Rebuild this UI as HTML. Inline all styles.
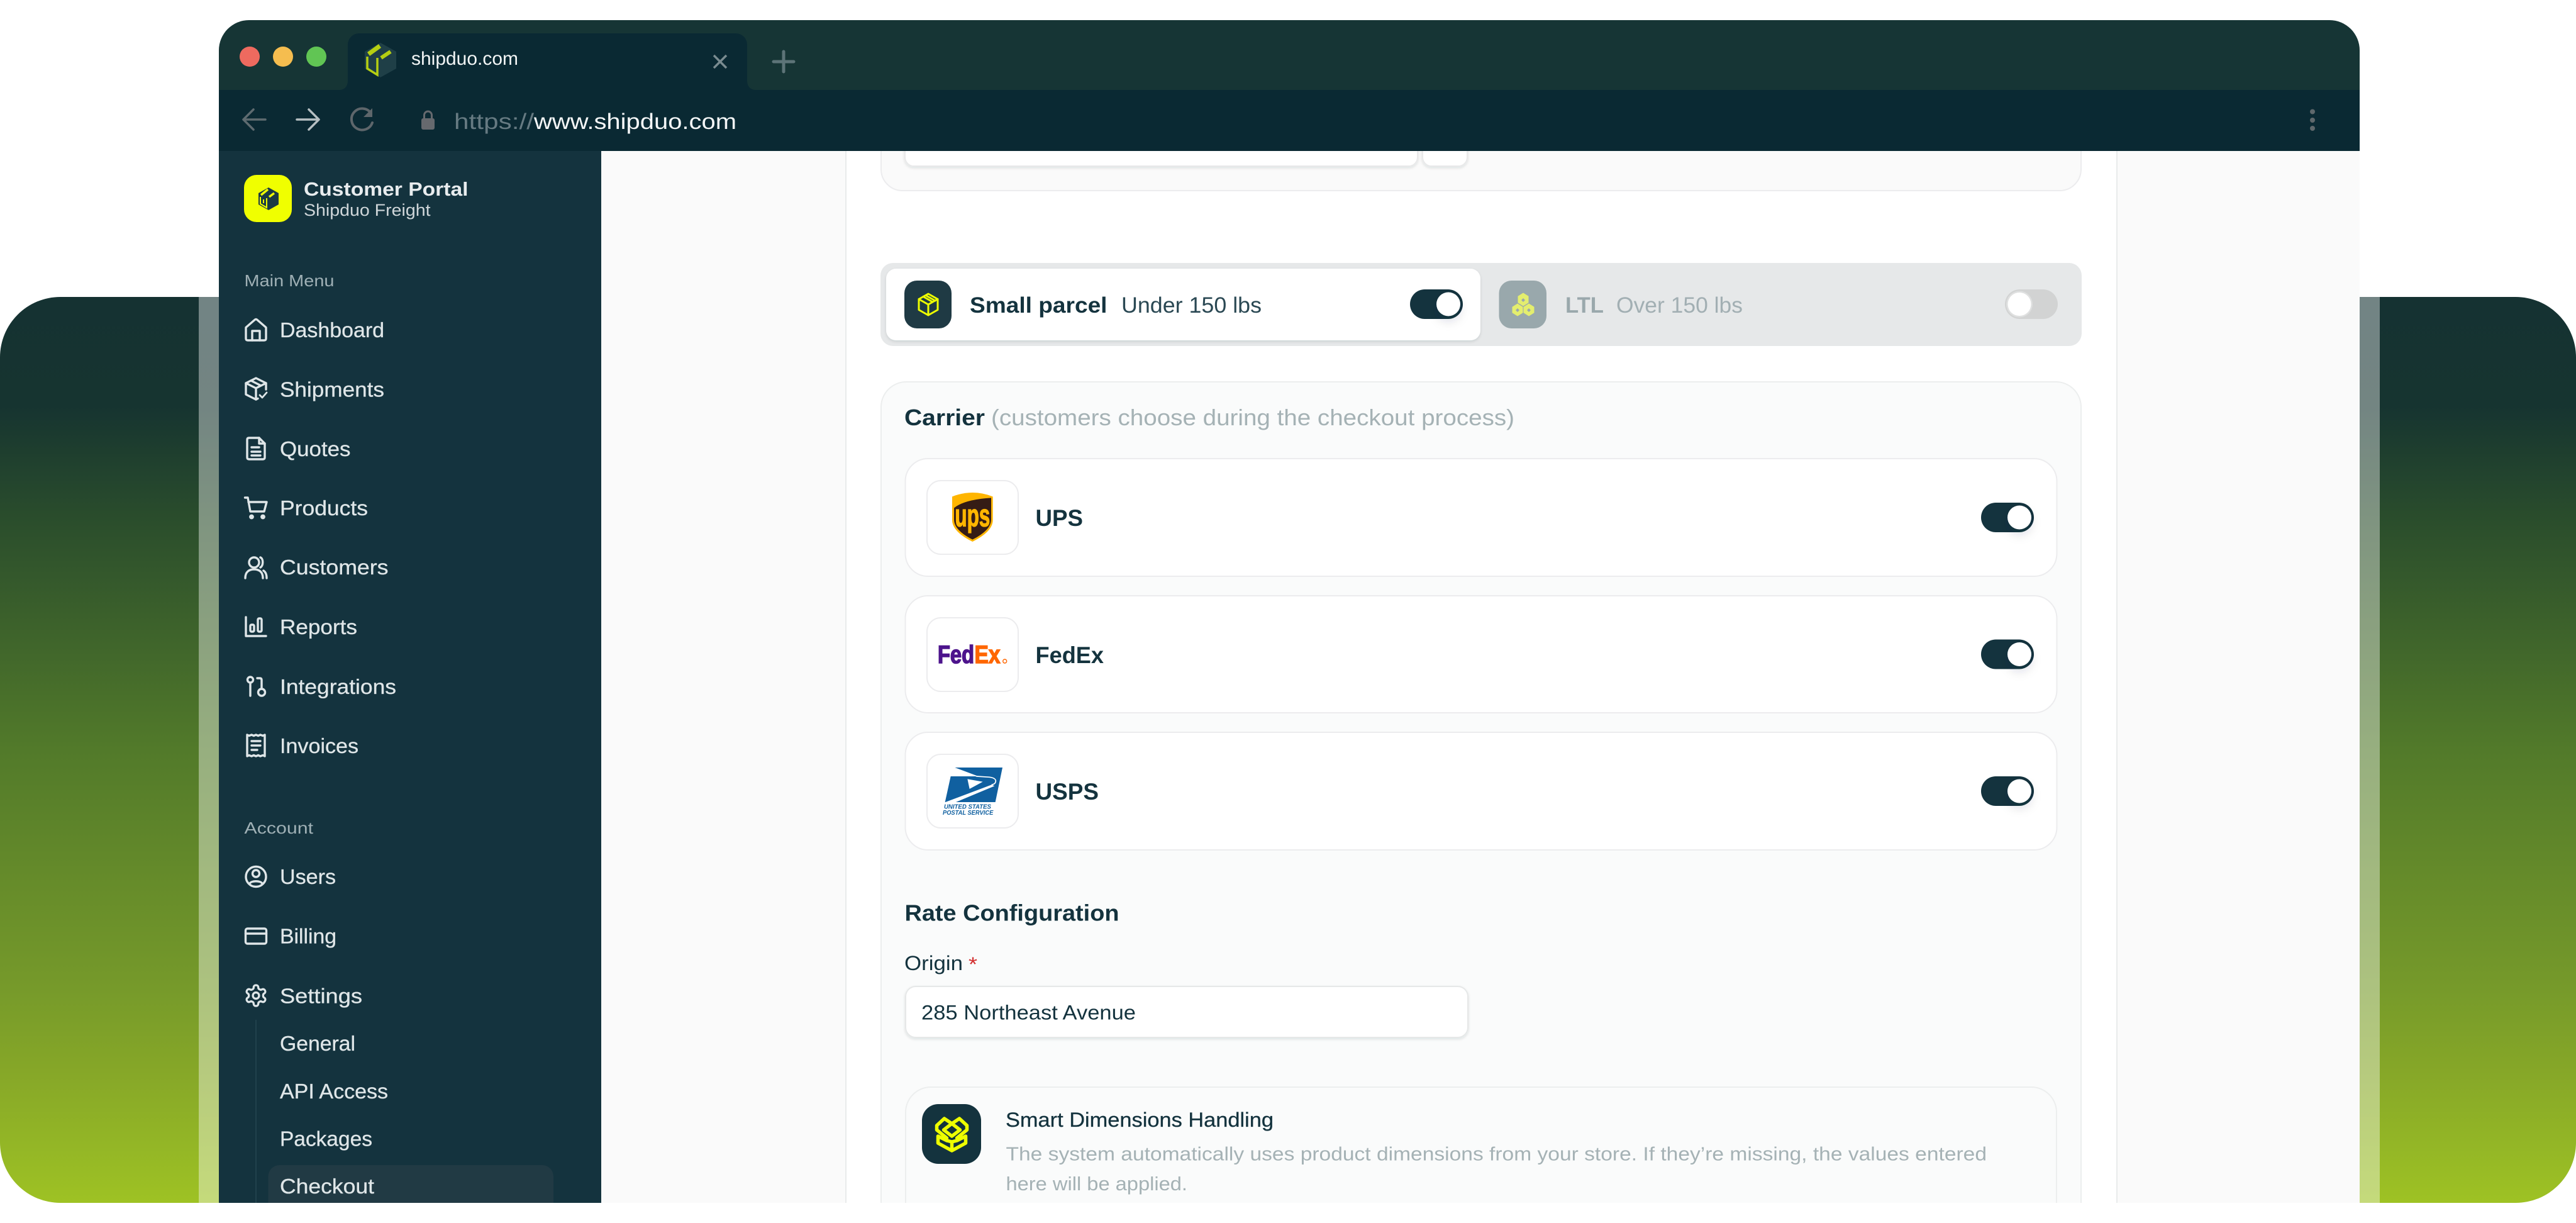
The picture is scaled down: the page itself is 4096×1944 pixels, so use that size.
<!DOCTYPE html>
<html lang="en">
<head>
<meta charset="utf-8">
<title>Shipduo Customer Portal</title>
<style>
html,body{margin:0;padding:0;background:#fff}
svg{display:block}
text{font-family:"Liberation Sans",sans-serif;white-space:pre}
.b{font-weight:700}
.nav{fill:#dfe6e8;font-size:33px;stroke:#dfe6e8;stroke-width:.3}
.sec{fill:#9fb0b5;font-size:26px}
.ico{fill:none;stroke:#dfe6e8;stroke-width:3.4;stroke-linecap:round;stroke-linejoin:round}
.car{fill:#14333e;font-size:37px;font-weight:700}
.card{fill:#fff;stroke:#ececee;stroke-width:2}
</style>
</head>
<body>
<svg xmlns="http://www.w3.org/2000/svg" width="4096" height="1944" viewBox="0 0 4096 1944">
<defs>
<linearGradient id="bg" gradientUnits="userSpaceOnUse" x1="0" y1="472" x2="0" y2="1912">
<stop offset="0" stop-color="#153232"/>
<stop offset=".12" stop-color="#163430"/>
<stop offset=".25" stop-color="#2b4e2c"/>
<stop offset=".5" stop-color="#527a2a"/>
<stop offset=".75" stop-color="#74982a"/>
<stop offset=".855" stop-color="#86a728"/>
<stop offset="1" stop-color="#9ec224"/>
</linearGradient>
<clipPath id="win"><path d="M348 1912V80a48 48 0 0 1 48-48H3704a48 48 0 0 1 48 48V1912Z"/></clipPath>
<filter id="sh" x="-20%" y="-40%" width="140%" height="200%"><feDropShadow dx="0" dy="3" stdDeviation="4" flood-color="#14333e" flood-opacity=".18"/></filter>
<filter id="sh2" x="-40%" y="-40%" width="180%" height="220%"><feDropShadow dx="0" dy="8" stdDeviation="8" flood-color="#14333e" flood-opacity=".14"/></filter>
<filter id="sh3" x="-5%" y="-20%" width="110%" height="150%"><feDropShadow dx="0" dy="2" stdDeviation="2" flood-color="#14333e" flood-opacity=".12"/></filter>
</defs>

<!-- gradient panel -->
<rect x="0" y="472" width="4096" height="1440" rx="96" fill="url(#bg)"/>
<rect x="316" y="472" width="32" height="1440" fill="#fff" fill-opacity=".4"/>
<rect x="3752" y="472" width="32" height="1440" fill="#fff" fill-opacity=".4"/>

<g clip-path="url(#win)">
<!-- main backdrop -->
<rect x="956" y="240" width="2796" height="1672" fill="#fafafa"/>
<rect x="1345" y="230" width="2021" height="1690" fill="#fff" stroke="#e9ebeb" stroke-width="2"/>

<!-- top partial card -->
<rect x="1401" y="150" width="1908" height="153" rx="34" fill="#fafafa" stroke="#ececee" stroke-width="2"/>
<rect x="1439" y="180" width="815" height="84" rx="14" fill="#fff" stroke="#e9e9ea" stroke-width="2" filter="url(#sh3)"/>
<rect x="2262" y="180" width="71" height="84" rx="14" fill="#fff" stroke="#e9e9ea" stroke-width="2" filter="url(#sh3)"/>

<!-- shipment type toggle -->
<rect x="1400" y="418" width="1910" height="132" rx="20" fill="#e6e8e9"/>
<rect x="1409" y="427" width="945" height="114" rx="16" fill="#fff" filter="url(#sh3)"/>
<rect x="1438" y="446" width="75" height="76" rx="20" fill="#1f3a44"/>
<g transform="translate(1476 484)" fill="none" stroke="#eeff00" stroke-width="3" stroke-linejoin="round" stroke-linecap="round">
<path d="M0-17 15-8.500V8.500L0 17-15 8.500V-8.500Z"/><path d="M-15-8.500 0 0 15-8.500M0 0V17M-8-12.500 7-4M-4-14.500 11-6"/>
</g>
<text x="1542" y="497" font-size="35" class="b" fill="#14333e" textLength="218.500" lengthAdjust="spacingAndGlyphs">Small parcel</text>
<text x="1783" y="497" font-size="35" fill="#2a4853" textLength="223" lengthAdjust="spacingAndGlyphs">Under 150 lbs</text>
<rect x="2242" y="460" width="84" height="47" rx="23.500" fill="#14333e"/>
<circle cx="2303" cy="483.500" r="19" fill="#fff" filter="url(#sh2)"/>

<rect x="2383.500" y="446" width="75.500" height="76" rx="20" fill="#99a8ac"/>
<g transform="translate(2422 484)" fill="#e4ee6e" stroke="#e4ee6e" stroke-width="1" stroke-linejoin="round">
<path d="M0-18 8-13V-3L0 2-8-3V-13Z"/><path d="M-9-1-1 4V13L-9 18-17 13V4Z"/><path d="M9-1 17 4V13L9 18 1 13V4Z"/>
<path d="M0-10 3-7 0-4-3-7ZM-9 6-6 9-9 12-12 9ZM9 6 12 9 9 12 6 9Z" fill="#99a8ac" stroke="none"/>
</g>
<text x="2489" y="497" font-size="35" class="b" fill="#9aa8ac" textLength="61" lengthAdjust="spacingAndGlyphs">LTL</text>
<text x="2570" y="497" font-size="35" fill="#a2afb3" textLength="201" lengthAdjust="spacingAndGlyphs">Over 150 lbs</text>
<rect x="3188" y="460" width="84" height="47" rx="23.500" fill="#d2d3d3"/>
<circle cx="3211" cy="483.500" r="21" fill="#dfe0e0"/>
<circle cx="3211" cy="483.500" r="18.500" fill="#fff"/>

<!-- carrier card -->
<rect x="1401" y="607" width="1908" height="1400" rx="40" fill="#fafbfb" stroke="#eceeee" stroke-width="2"/>
<text x="1438" y="676" font-size="36" class="b" fill="#14333e" textLength="128" lengthAdjust="spacingAndGlyphs">Carrier</text>
<text x="1576" y="676" font-size="36" fill="#a5b2b5" textLength="832" lengthAdjust="spacingAndGlyphs">(customers choose during the checkout process)</text>

<!-- UPS -->
<rect x="1439.500" y="729" width="1831" height="187" rx="36" class="card"/>
<rect x="1474" y="764" width="145" height="117" rx="22" class="card"/>
<g transform="translate(1420 720) scale(.33333)">
<path d="M282 208Q380 170 476 208V320Q476 375 379 423 282 375 282 320Z" fill="#ffb500"/>
<path d="M291 262Q340 222 468 214V318Q468 368 379 413 291 368 291 318Z" fill="#351c15"/>
<text x="295" y="350" font-size="150" class="b" fill="#ffb500" stroke="#ffb500" stroke-width="4" textLength="168" lengthAdjust="spacingAndGlyphs">ups</text>
</g>
<text x="1646.500" y="836" class="car" textLength="75.500" lengthAdjust="spacingAndGlyphs">UPS</text>
<rect x="3150" y="799" width="84" height="47" rx="23.500" fill="#14333e"/>
<circle cx="3211" cy="822.500" r="19" fill="#fff" filter="url(#sh2)"/>

<!-- FedEx -->
<rect x="1439.500" y="947" width="1831" height="186" rx="36" class="card"/>
<rect x="1474" y="982" width="145" height="117" rx="22" class="card"/>
<text x="1491" y="1054" font-size="40" class="b" fill="#4d148c" stroke="#4d148c" stroke-width="1.600" textLength="58" lengthAdjust="spacingAndGlyphs">Fed</text>
<text x="1549.500" y="1054" font-size="40" class="b" fill="#ff6600" stroke="#ff6600" stroke-width="1.600" textLength="41" lengthAdjust="spacingAndGlyphs">Ex</text>
<circle cx="1597.700" cy="1051" r="3" fill="none" stroke="#ff6600" stroke-width="1.400"/>
<text x="1646.500" y="1054" class="car" textLength="108.500" lengthAdjust="spacingAndGlyphs">FedEx</text>
<rect x="3150" y="1016.500" width="84" height="47" rx="23.500" fill="#14333e"/>
<circle cx="3211" cy="1040" r="19" fill="#fff" filter="url(#sh2)"/>

<!-- USPS -->
<rect x="1439.500" y="1164" width="1831" height="187" rx="36" class="card"/>
<rect x="1474" y="1199" width="145" height="117" rx="22" class="card"/>
<g transform="translate(1420 960) scale(.33333)">
<polygon points="288,780 522,780 488,945 248,945 275,822 400,822" fill="#1060a0"/>
<polygon points="250,945 300,945 484,868 470,862" fill="#fff"/>
<path d="M288 780 400 822 460 826Q490 830 490 845 488 860 470 862" fill="none" stroke="#fff" stroke-width="5"/>
<polygon points="355,835 428,848 365,882" fill="#fff"/>
<text x="243" y="977" font-size="29" font-style="italic" class="b" fill="#1060a0" textLength="225" lengthAdjust="spacingAndGlyphs">UNITED STATES</text>
<text x="237" y="1005" font-size="29" font-style="italic" class="b" fill="#1060a0" textLength="241" lengthAdjust="spacingAndGlyphs">POSTAL SERVICE</text>
</g>
<text x="1646.500" y="1271" class="car" textLength="100.500" lengthAdjust="spacingAndGlyphs">USPS</text>
<rect x="3150" y="1234" width="84" height="47" rx="23.500" fill="#14333e"/>
<circle cx="3211" cy="1257.500" r="19" fill="#fff" filter="url(#sh2)"/>

<!-- Rate configuration -->
<text x="1438.500" y="1463.500" font-size="36" class="b" fill="#14333e" textLength="341" lengthAdjust="spacingAndGlyphs">Rate Configuration</text>
<text x="1438" y="1542" font-size="32" fill="#14333e" textLength="93" lengthAdjust="spacingAndGlyphs">Origin</text>
<text x="1540" y="1544" font-size="32" fill="#d32f2f" textLength="14" lengthAdjust="spacingAndGlyphs">*</text>
<rect x="1440" y="1568" width="894" height="81" rx="16" fill="#fff" stroke="#e6e8e8" stroke-width="2" filter="url(#sh3)"/>
<text x="1465" y="1620.500" font-size="32" fill="#14333e" textLength="341" lengthAdjust="spacingAndGlyphs">285 Northeast Avenue</text>

<!-- Smart dimensions -->
<rect x="1440" y="1728" width="1830" height="300" rx="40" fill="#fafbfb" stroke="#eceeee" stroke-width="2"/>
<rect x="1466" y="1755" width="94" height="95" rx="26" fill="#14333e"/>
<g transform="translate(1513.500 1803)" fill="none" stroke="#eeff00" stroke-width="5.500" stroke-linejoin="round" stroke-linecap="round">
<path d="M0-17 13-7 0 3-13-7Z"/><path d="M0-17-12-25-24-14V-7L-8 6"/><path d="M0-17 12-25 24-14V-7L8 6"/>
<path d="M-22 3V14L0 26 22 14V3M0 12V26M-22 3-8 10 0 12 8 10 22 3"/>
</g>
<text x="1599" y="1791" font-size="32" fill="#14333e" stroke="#14333e" stroke-width=".3" textLength="426" lengthAdjust="spacingAndGlyphs">Smart Dimensions Handling</text>
<text x="1599.500" y="1844.500" font-size="31" fill="#a5b2b5" textLength="1559.500" lengthAdjust="spacingAndGlyphs">The system automatically uses product dimensions from your store. If they’re missing, the values entered</text>
<text x="1599.500" y="1892" font-size="31" fill="#a5b2b5" textLength="288.500" lengthAdjust="spacingAndGlyphs">here will be applied.</text>

<!-- sidebar -->
<rect x="348" y="240" width="608" height="1672" fill="#14333e"/>
<rect x="388" y="278" width="76" height="75" rx="20" fill="#f0ff00"/>
<g transform="translate(427 316)">
<path d="M0-18 16-9V9L0 18-16 9V-9Z" fill="#1b3a44"/>
<path d="M-12-6-1-15M1-3 9-9" stroke="#f0ff00" stroke-width="3.500" fill="none"/>
<path d="M-13-3V8L-3 14V-1M-8 1V7" stroke="#f0ff00" stroke-width="2" fill="none"/>
</g>
<text x="483" y="311" font-size="31" class="b" fill="#e8ecee" textLength="261.500" lengthAdjust="spacingAndGlyphs">Customer Portal</text>
<text x="483" y="343" font-size="27" fill="#cfd6d9" textLength="201.500" lengthAdjust="spacingAndGlyphs">Shipduo Freight</text>
<text x="388.500" y="455" class="sec" textLength="143" lengthAdjust="spacingAndGlyphs">Main Menu</text>

<text x="445" y="536" class="nav" textLength="166" lengthAdjust="spacingAndGlyphs">Dashboard</text>
<g class="ico" transform="translate(407 524)"><path d="M-16-3.500-1.500-16Q0-17 1.500-16L16-3.500V14Q16 17 13 17H-13Q-16 17-16 14Z"/><path d="M-6 17V2H6V17"/></g>

<text x="445" y="630.500" class="nav" textLength="166" lengthAdjust="spacingAndGlyphs">Shipments</text>
<g class="ico" transform="translate(407 618)"><path d="M3 15.500 0 17-16 9V-9L0-17 16-9V1"/><path d="M-16-9 0-1 16-9M0-1V17M-8-13 8-5"/><path d="M6 10 10 14 17 6" stroke-width="2.800"/></g>

<text x="445" y="725" class="nav" textLength="112.500" lengthAdjust="spacingAndGlyphs">Quotes</text>
<g class="ico" transform="translate(407 713)"><path d="M-14-14Q-14-17-11-17H5L14-8V14Q14 17 11 17H-11Q-14 17-14 14Z"/><path d="M5-17V-8H14M-7-2H5M-7 5H7M-7 11H7"/></g>

<text x="445" y="819" class="nav" textLength="140" lengthAdjust="spacingAndGlyphs">Products</text>
<g class="ico" transform="translate(407 807)"><path d="M-17.500-16H-13L-9 6H13L17-9H-12"/><circle cx="-7" cy="14.500" r="2.200" fill="#dfe6e8"/><circle cx="11" cy="14.500" r="2.200" fill="#dfe6e8"/></g>

<text x="445" y="913" class="nav" textLength="172.500" lengthAdjust="spacingAndGlyphs">Customers</text>
<g class="ico" transform="translate(407 902)"><circle cx="-3" cy="-8" r="8"/><path d="M-17 17C-17 7-11 3-3 3 5 3 11 7 11 17M7-16C12-14 12-3 7 0M12 5C15 7 17 11 17 17"/></g>

<text x="445" y="1008" class="nav" textLength="123" lengthAdjust="spacingAndGlyphs">Reports</text>
<g class="ico" transform="translate(407 996)" stroke-width="3"><path d="M-16-15V15H16"/><rect x="-9" y="-3" width="6" height="11" rx="2"/><rect x="3" y="-13" width="6" height="21" rx="2"/></g>

<text x="445" y="1103" class="nav" textLength="185" lengthAdjust="spacingAndGlyphs">Integrations</text>
<g class="ico" transform="translate(407 1091)"><circle cx="-9" cy="-10.500" r="4.500"/><path d="M-9-6V15M2-13H6Q9-13 9-10V4"/><circle cx="9" cy="9.500" r="5.500"/></g>

<text x="445" y="1197" class="nav" textLength="125" lengthAdjust="spacingAndGlyphs">Invoices</text>
<g class="ico" transform="translate(407 1185)"><path d="M-14-17-11-15.500-7-17-3.500-15.500 0-17 3.500-15.500 7-17 11-15.500 14-17V17L11 15.500 7 17 3.500 15.500 0 17-3.500 15.500-7 17-11 15.500-14 17Z"/><path d="M-7-7H7M-7 0H7M-7 7H2"/></g>

<text x="388.500" y="1325" class="sec" textLength="109.500" lengthAdjust="spacingAndGlyphs">Account</text>

<text x="445" y="1405" class="nav" textLength="89" lengthAdjust="spacingAndGlyphs">Users</text>
<g class="ico" transform="translate(407 1393.500)"><circle r="16"/><circle cy="-5" r="5.500"/><path d="M-10 11C-8 6 8 6 10 11"/></g>

<text x="445" y="1499.500" class="nav" textLength="90" lengthAdjust="spacingAndGlyphs">Billing</text>
<g class="ico" transform="translate(407 1488)"><rect x="-16.500" y="-12" width="33" height="24" rx="3"/><path d="M-16.500-4H16.500"/></g>

<text x="445" y="1594.500" class="nav" textLength="131" lengthAdjust="spacingAndGlyphs">Settings</text>
<g transform="translate(407 1582.500) scale(1.650) translate(-12 -12)" fill="none" stroke="#dfe6e8" stroke-width="2" stroke-linecap="round" stroke-linejoin="round"><path d="M12.220 2h-.44a2 2 0 0 0-2 2v.18a2 2 0 0 1-1 1.730l-.43.25a2 2 0 0 1-2 0l-.15-.08a2 2 0 0 0-2.730.73l-.22.38a2 2 0 0 0 .73 2.730l.15.1a2 2 0 0 1 1 1.720v.51a2 2 0 0 1-1 1.740l-.15.09a2 2 0 0 0-.73 2.730l.22.38a2 2 0 0 0 2.730.73l.15-.08a2 2 0 0 1 2 0l.43.25a2 2 0 0 1 1 1.730V20a2 2 0 0 0 2 2h.44a2 2 0 0 0 2-2v-.18a2 2 0 0 1 1-1.730l.43-.25a2 2 0 0 1 2 0l.15.08a2 2 0 0 0 2.730-.73l.22-.39a2 2 0 0 0-.73-2.730l-.15-.08a2 2 0 0 1-1-1.740v-.5a2 2 0 0 1 1-1.740l.15-.09a2 2 0 0 0 .73-2.730l-.22-.38a2 2 0 0 0-2.730-.73l-.15.08a2 2 0 0 1-2 0l-.43-.25a2 2 0 0 1-1-1.730V4a2 2 0 0 0-2-2z"/><circle cx="12" cy="12" r="3"/></g>

<rect x="406" y="1621" width="2" height="291" fill="#21414c"/>
<rect x="426.500" y="1852" width="453.500" height="90" rx="18" fill="#213a44"/>
<text x="445" y="1670" class="nav" textLength="120" lengthAdjust="spacingAndGlyphs">General</text>
<text x="445" y="1746" class="nav" textLength="172" lengthAdjust="spacingAndGlyphs">API Access</text>
<text x="445" y="1821.500" class="nav" textLength="147" lengthAdjust="spacingAndGlyphs">Packages</text>
<text x="445" y="1897" class="nav" textLength="150" lengthAdjust="spacingAndGlyphs">Checkout</text>

<!-- browser chrome -->
<rect x="348" y="32" width="3404" height="111" fill="#163535"/>
<rect x="348" y="143" width="3404" height="97" fill="#0a2933"/>
<path d="M541 143Q553 141 553 128V71A18 18 0 0 1 571 53H1170A18 18 0 0 1 1188 71V128Q1188 141 1200 143Z" fill="#0a2933"/>
<circle cx="397" cy="90" r="16" fill="#ee6a5f"/>
<circle cx="450" cy="90" r="16" fill="#f5bd4f"/>
<circle cx="503" cy="90" r="16" fill="#61c554"/>

<!-- favicon -->
<path d="M605 68 630 82V109L605 123 580 109V82Z" fill="#1f3f47"/>
<path d="M586 86 604 73" stroke="#b5cf12" stroke-width="7" fill="none"/>
<path d="M606 92 621 82" stroke="#b5cf12" stroke-width="6" fill="none"/>
<path d="M584 90V109L600 119V92" stroke="#b5cf12" stroke-width="3.500" fill="none"/>

<text x="654" y="103" font-size="30" fill="#f2f5f5" textLength="170" lengthAdjust="spacingAndGlyphs">shipduo.com</text>
<path d="M1135 88 1155 108M1155 88 1135 108" stroke="#7a8b90" stroke-width="3.500" fill="none"/>
<path d="M1246 82V114M1230 98H1262" stroke="#5d7478" stroke-width="5" stroke-linecap="round" fill="none"/>

<path d="M403 174 387 190 403 206M387 190H422" stroke="#5e6b70" stroke-width="3.500" fill="none" stroke-linecap="round" stroke-linejoin="round"/>
<path d="M491 174 507 190 491 206M507 190H472" stroke="#b6bfc2" stroke-width="3.500" fill="none" stroke-linecap="round" stroke-linejoin="round"/>
<path d="M590 180A17 17 0 1 0 592 195" stroke="#5e666b" stroke-width="4" fill="none" stroke-linecap="round"/>
<path d="M592 172V186H578Z" fill="#5e666b"/>
<rect x="670" y="188" width="21" height="18" rx="3" fill="#66696e"/>
<path d="M674.500 188V183A6 6 0 0 1 686.500 183V188" stroke="#66696e" stroke-width="3" fill="none"/>
<text x="722" y="205" font-size="35" fill="#667a82" textLength="127" lengthAdjust="spacingAndGlyphs">https://</text>
<text x="849" y="205" font-size="35" fill="#f4f6f7" textLength="322" lengthAdjust="spacingAndGlyphs">www.shipduo.com</text>
<circle cx="3677" cy="177.500" r="4" fill="#5f686c"/>
<circle cx="3677" cy="191" r="4" fill="#5f686c"/>
<circle cx="3677" cy="204" r="4" fill="#5f686c"/>
</g>
</svg>
</body>
</html>
